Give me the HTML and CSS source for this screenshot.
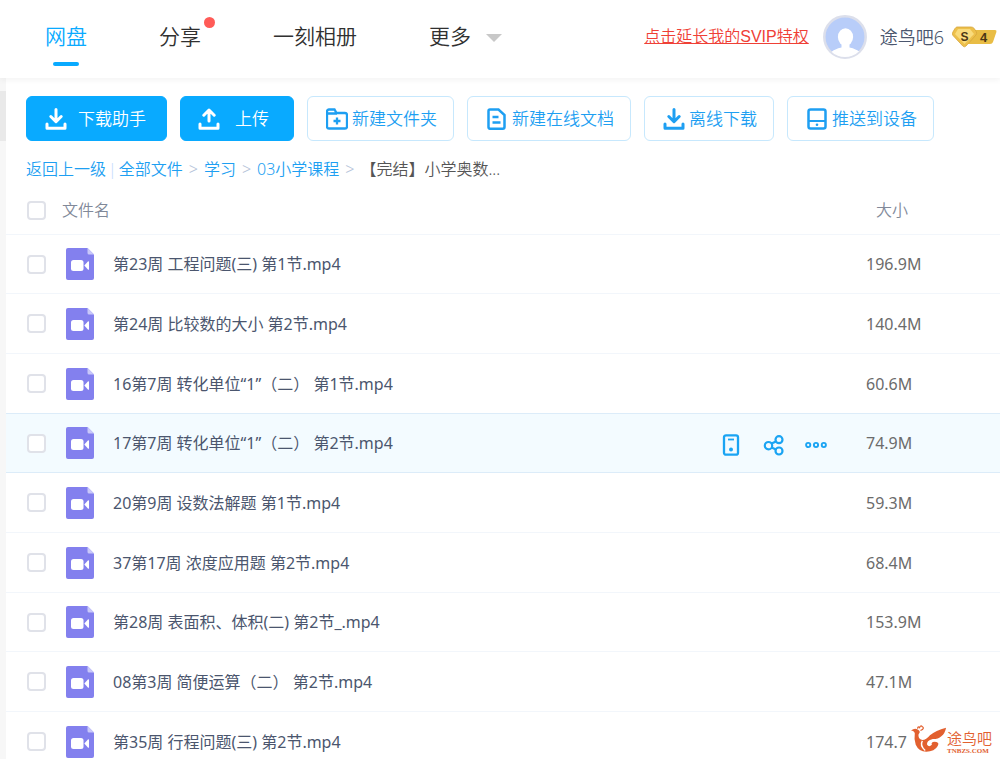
FILE: index.html
```html
<!DOCTYPE html>
<html lang="zh-CN">
<head>
<meta charset="utf-8">
<meta name="viewport" content="width=device-width, initial-scale=1">
<title>网盘</title>
<link rel="stylesheet" href="styles.css">
</head>
<body>
<svg class="defs" aria-hidden="true">
  <symbol id="video" viewBox="0 0 28 32">
    <path d="M2 0h19.500l6.500 6.500V30a2 2 0 0 1-2 2H2a2 2 0 0 1-2-2V2a2 2 0 0 1 2-2z" fill="#8380ee"/>
    <path d="M21.500 0l6.500 6.500h-5a1.500 1.500 0 0 1-1.500-1.500z" fill="#c9c8fa"/>
    <rect x="5" y="12" width="12.500" height="11" rx="2.500" fill="#fff"/>
    <path d="M18.300 17.500l3.600-4q1.100-.8 1.100.6v6.800q0 1.400-1.100.6z" fill="#fff"/>
  </symbol>
  <symbol id="download" viewBox="0 0 22 22">
    <path d="M11 1.500v11M5.800 8.500l5.200 5.200 5.200-5.200M2 16v4.300h18V16" fill="none" stroke="currentColor" stroke-width="3" stroke-linecap="round" stroke-linejoin="round"/>
  </symbol>
</svg>
<header class="topbar">
  <nav class="nav">
    <a class="nav-item current" href="#">网盘</a>
    <a class="nav-item" href="#">分享<span class="dot"></span></a>
    <a class="nav-item" href="#">一刻相册</a>
    <a class="nav-item" href="#">更多<span class="caret"></span></a>
  </nav>
  <div class="account">
    <a class="svip" href="#">点击延长我的SVIP特权</a>
    <svg class="avatar" viewBox="0 0 44 44" role="img" aria-label="头像">
      <defs><clipPath id="face"><circle cx="22" cy="22" r="20"/></clipPath></defs>
      <circle cx="22" cy="22" r="20.700" fill="#b8cdf9" stroke="#dcdfeb" stroke-width="2.500"/>
      <g clip-path="url(#face)" fill="#fff">
        <ellipse cx="22.500" cy="22" rx="7.600" ry="8.700"/>
        <path d="M18.500 28h8v4.500q7 1.500 10 4.500v7h-28v-7q3-3 10-4.500z"/>
      </g>
    </svg>
    <span class="user">途鸟吧6</span>
    <svg class="badge" viewBox="0 0 45 22" role="img" aria-label="S4">
      <path d="M16 4h27q2 0 1.400 2L41 16q-.6 2-3 2H16z" fill="#e9bd45"/>
      <path d="M5 1h14q2 0 3.200 1.500l2 3q1 2-.3 3.600L14 20q-1.600 1.600-3.200 0L1 9.500Q-.2 8 .9 6L3 2.500Q4 1 5 1z" fill="#edc04b" stroke="#d6a43b" stroke-width=".8"/>
      <path d="M6 3h12l4 5-9.500 10L3 8z" fill="#f9db7c"/>
      <text class="badge-s" x="8.500" y="14.500">S</text>
      <text class="badge-n" x="28" y="15.500">4</text>
    </svg>
  </div>
</header>
<div class="body">
  <aside class="rail"><span class="thumb"></span></aside>
  <main class="pane">
    <div class="toolbar">
      <button class="btn solid"><svg class="ico" viewBox="0 0 22 22"><use href="#download"/></svg><span>下载助手</span></button>
      <button class="btn solid upload"><svg class="ico" viewBox="0 0 22 22"><path d="M11 13V2M5.800 7.200L11 2l5.200 5.200M2 16v4.300h18V16" fill="none" stroke="currentColor" stroke-width="3" stroke-linecap="round" stroke-linejoin="round"/></svg><span>上传</span></button>
      <button class="btn"><svg class="ico" viewBox="1 0 22 22"><path d="M2 18.500v-15a2 2 0 0 1 2-2h5.500l2 3.500h8.500a2 2 0 0 1 2 2v11.500a2 2 0 0 1-2 2h-16a2 2 0 0 1-2-2zM2 5.500h10M12 9.500v7M8.500 13h7" fill="none" stroke="currentColor" stroke-width="2.300"/></svg><span>新建文件夹</span></button>
      <button class="btn"><svg class="ico" viewBox="0 0 22 22"><path d="M4 1.500h8.500l6 5.500v12a1.700 1.700 0 0 1-1.700 1.700H4A1.700 1.700 0 0 1 2.500 19V3A1.500 1.500 0 0 1 4 1.500zM6.500 9h6M6.500 14.500h8" fill="none" stroke="currentColor" stroke-width="2.500"/></svg><span>新建在线文档</span></button>
      <button class="btn"><svg class="ico" viewBox="0 0 22 22"><use href="#download"/></svg><span>离线下载</span></button>
      <button class="btn"><svg class="ico" viewBox="0 0 22 22"><rect x="2.500" y="1.500" width="17" height="19" rx="2" fill="none" stroke="currentColor" stroke-width="2.500"/><path d="M2.500 13h17" stroke="currentColor" stroke-width="2"/><circle cx="11" cy="16.800" r="1.300" fill="currentColor"/></svg><span>推送到设备</span></button>
    </div>
    <nav class="crumbs">
      <a href="#">返回上一级</a><i class="bar">|</i><a href="#">全部文件</a><i>&gt;</i><a href="#">学习</a><i>&gt;</i><a href="#">03小学课程</a><i>&gt;</i><span>【完结】小学奥数...</span>
    </nav>
    <table class="files">
      <colgroup><col class="c-check"><col class="c-type"><col><col class="c-tools"><col class="c-size"></colgroup>
      <thead>
        <tr><th class="check"><input type="checkbox" aria-label="全选"></th><th colspan="3" class="name-head">文件名</th><th class="size-head">大小</th></tr>
      </thead>
      <tbody>
        <tr><td class="check"><input type="checkbox" aria-label="选择 第23周"></td><td class="type"><svg><use href="#video"/></svg></td><td class="name">第23周 工程问题(三) 第1节.mp4</td><td></td><td class="size">196.9M</td></tr>
        <tr><td class="check"><input type="checkbox" aria-label="选择 第24周"></td><td class="type"><svg><use href="#video"/></svg></td><td class="name">第24周 比较数的大小 第2节.mp4</td><td></td><td class="size">140.4M</td></tr>
        <tr><td class="check"><input type="checkbox" aria-label="选择 16第7周"></td><td class="type"><svg><use href="#video"/></svg></td><td class="name">16第7周 转化单位“1”（二） 第1节.mp4</td><td></td><td class="size">60.6M</td></tr>
        <tr class="active"><td class="check"><input type="checkbox" aria-label="选择 17第7周"></td><td class="type"><svg><use href="#video"/></svg></td><td class="name">17第7周 转化单位“1”（二） 第2节.mp4</td>
          <td><div class="tools">
            <button aria-label="推送"><svg viewBox="0 0 22 22"><rect x="3" y="1.300" width="14" height="19.400" rx="2" fill="none" stroke="currentColor" stroke-width="2.300"/><path d="M7 5.500h6" stroke="currentColor" stroke-width="1.800"/><circle cx="10" cy="15.500" r="2" fill="currentColor"/></svg></button>
            <button aria-label="分享"><svg viewBox="0 0 22 22"><g fill="none" stroke="currentColor" stroke-width="2.200"><circle cx="5.500" cy="11.700" r="3.700"/><circle cx="16" cy="5.700" r="3.500"/><circle cx="16" cy="17" r="3.500"/><path d="M8.600 9.600l4.300-2.200M8.600 13.500l4.300 2"/></g></svg></button>
            <button aria-label="更多"><svg viewBox="0 0 22 22"><g fill="none" stroke="currentColor" stroke-width="1.900"><circle cx="3.200" cy="11" r="2.100"/><circle cx="11" cy="11" r="2.100"/><circle cx="18.800" cy="11" r="2.100"/></g></svg></button>
          </div></td><td class="size">74.9M</td></tr>
        <tr><td class="check"><input type="checkbox" aria-label="选择 20第9周"></td><td class="type"><svg><use href="#video"/></svg></td><td class="name">20第9周 设数法解题 第1节.mp4</td><td></td><td class="size">59.3M</td></tr>
        <tr><td class="check"><input type="checkbox" aria-label="选择 37第17周"></td><td class="type"><svg><use href="#video"/></svg></td><td class="name">37第17周 浓度应用题 第2节.mp4</td><td></td><td class="size">68.4M</td></tr>
        <tr><td class="check"><input type="checkbox" aria-label="选择 第28周"></td><td class="type"><svg><use href="#video"/></svg></td><td class="name">第28周 表面积、体积(二) 第2节_.mp4</td><td></td><td class="size">153.9M</td></tr>
        <tr><td class="check"><input type="checkbox" aria-label="选择 08第3周"></td><td class="type"><svg><use href="#video"/></svg></td><td class="name">08第3周 简便运算（二） 第2节.mp4</td><td></td><td class="size">47.1M</td></tr>
        <tr><td class="check"><input type="checkbox" aria-label="选择 第35周"></td><td class="type"><svg><use href="#video"/></svg></td><td class="name">第35周 行程问题(三) 第2节.mp4</td><td></td><td class="size">174.7M</td></tr>
      </tbody>
    </table>
  </main>
</div>
<div class="brand">
  <svg viewBox="0 0 38 30" aria-hidden="true">
    <path d="M0 5Q4 2 7 4Q11 6 8 9Q7 14 12 15Q16 15 20 10Q26 5 37 2Q36 8 32 11Q29 14 23 14Q16 16 17 20Q19 23 22 20Q21 18 23 17Q28 16 29 19Q28 25 20 27Q9 29 5 20Q3 14 4 8Q3 5 0 5z" fill="#e2602f"/>
    <path d="M12 16Q9 21 15 26" fill="none" stroke="#fff" stroke-width="1.500"/>
    <path d="M7 3Q7 0 9 2Q10-1 12 1Q14 2 12 4L10 5" fill="none" stroke="#e2602f" stroke-width="1.300"/>
  </svg>
  <div class="brand-text"><span>途鸟吧</span><small>TNBZS.COM</small></div>
</div>
</body>
</html>
```
FILE: styles.css
```css
* { box-sizing: border-box; }
body {
  margin: 0;
  height: 100vh;
  overflow: hidden;
  position: relative;
  display: flex;
  flex-direction: column;
  background: #fff;
  color: #4b566e;
  font: 350 16px/24px "Noto Sans", "Noto Sans CJK SC", sans-serif;
  text-spacing-trim: space-all;
}
a { color: inherit; text-decoration: none; }
button { font: inherit; color: inherit; cursor: pointer; }
.defs { display: none; }

.topbar {
  flex: none;
  height: 78px;
  padding: 0 3px 0 45px;
  display: flex;
  justify-content: space-between;
  align-items: flex-start;
  box-shadow: 0 2px 6px rgba(0, 0, 0, .05);
  z-index: 1;
}
.nav { display: flex; gap: 72px; }
.nav-item {
  position: relative;
  padding-top: 20px;
  font-size: 21px;
  line-height: 32px;
  color: #303030;
  display: flex;
  align-items: center;
  white-space: nowrap;
}
.current { color: #09aaff; }
.current::after {
  content: "";
  position: absolute;
  left: 8px;
  right: 8px;
  top: 62px;
  height: 4px;
  border-radius: 2px;
  background: #09aaff;
}
.dot {
  position: absolute;
  right: -14px;
  top: 17px;
  width: 11px;
  height: 11px;
  border-radius: 50%;
  background: #ff5b57;
}
.caret {
  margin-left: 15px;
  margin-top: 4px;
  border: 8px solid transparent;
  border-top-color: #c8c8c8;
  border-bottom: 0;
}
.account { display: flex; align-items: center; padding-top: 15px; white-space: nowrap; }
.svip {
  color: #ef4036;
  font-family: "Liberation Sans", "Noto Sans CJK SC", sans-serif;
  text-decoration: underline;
  margin-right: 14px;
}
.avatar { width: 44px; height: 44px; margin-right: 13px; }
.user { font-size: 18px; margin-right: 8px; }
.badge { width: 45px; height: 22px; }
.badge text { font-family: "Liberation Sans", sans-serif; font-weight: 700; fill: #4b3716; }
.badge-s { font-size: 12px; }
.badge-n { font-size: 13px; }

.body { flex: 1; min-height: 0; display: flex; }
.rail { flex: none; width: 6px; padding-top: 13px; background: #f7f7f7; }
.thumb { display: block; height: 50px; background: #e9e9e9; }
.pane { flex: 1; min-width: 0; padding-top: 18px; }

.toolbar { display: flex; gap: 13px; padding-left: 20px; }
.btn {
  height: 45px;
  padding: 0 16px 0 18px;
  display: flex;
  align-items: center;
  gap: 4px;
  border: 1px solid #c7e8fd;
  border-radius: 6px;
  background: #fff;
  color: #1e9ff2;
  font-size: 17px;
  white-space: nowrap;
}
.solid { background: #09aaff; border-color: #09aaff; color: #fff; gap: 11px; padding: 0 20px 0 18px; }
.upload { gap: 15px; padding: 0 24px 0 17px; }
.ico { width: 22px; height: 22px; }

.crumbs { display: flex; gap: 6px; padding: 16px 0 0 20px; color: #1e9ff2; white-space: nowrap; }
.crumbs i { font-style: normal; color: #b5c3d9; }
.crumbs .bar { margin: 0 -4px; color: #c4dbfe; }
.crumbs span { color: #555; }

.files { width: 100%; table-layout: fixed; border-spacing: 0; }
.c-check { width: 56px; }
.c-type { width: 51px; }
.c-tools { width: 160px; }
.c-size { width: 140px; }
th, td { padding: 0; border-bottom: 1px solid #f2f6fb; text-align: left; font-weight: inherit; white-space: nowrap; }
thead tr { height: 54px; }
thead th { padding-top: 5px; }
tbody tr { height: 60px; font-weight: 400; }
tbody tr:nth-child(3n + 1) { height: 59px; }
.check { padding-left: 21px; }
.check input {
  appearance: none;
  display: block;
  width: 19px;
  height: 19px;
  margin: 0;
  border: 2px solid #e0e2e9;
  border-radius: 4px;
  background: #fff;
}
.type { padding-left: 4px; }
.type svg { display: block; width: 28px; height: 32px; }
.name-head, .size-head { color: #818999; }
.size-head { padding-left: 16px; }
.size { padding-left: 6px; color: #6b6b6b; }
.active td { background: #f3fbff; border-color: #dcecf9; }
tr:has(+ .active) td { border-color: #dcecf9; }
.tools { display: flex; justify-content: flex-end; gap: 20px; padding: 4px 33px 0 0; }
.tools button { padding: 0; border: 0; background: none; color: #1aa4f3; width: 22px; height: 22px; }
.tools svg { display: block; width: 22px; height: 22px; }

.brand {
  position: absolute;
  right: 0;
  bottom: 0;
  width: 93px;
  height: 36px;
  padding: 2px 0 0 4px;
  display: flex;
  background: #fff;
  color: #e2602f;
}
.brand svg { flex: none; width: 36px; height: 30px; }
.brand-text { display: flex; flex-direction: column; padding-top: 4px; }
.brand-text span { font-size: 15px; line-height: 18px; }
.brand-text small { font: 700 7px/8px "Liberation Serif", serif; }
```
